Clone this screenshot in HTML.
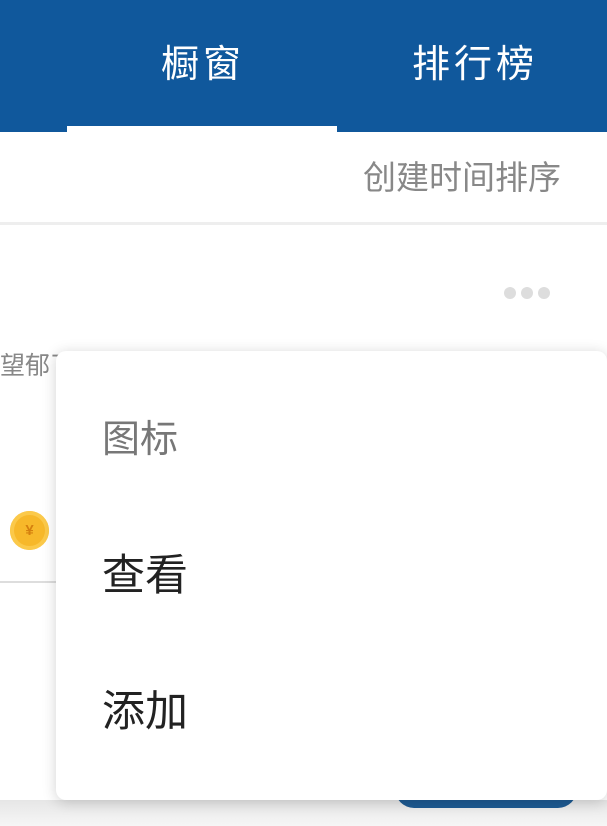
<!DOCTYPE html>
<html><head><meta charset="utf-8"><style>
*{margin:0;padding:0;box-sizing:border-box}
body{width:607px;height:826px;overflow:hidden;background:#fff;position:relative;font-family:"Liberation Sans","Noto Sans CJK SC",sans-serif}
.hdr{position:absolute;left:0;top:0;width:607px;height:132px;background:#10589c}
.t{position:absolute;top:40px;color:#fff;font-size:38px;line-height:50px;letter-spacing:4px}
.ul{position:absolute;left:67px;top:126px;width:270px;height:6px;background:#fff}
.sort{position:absolute;right:46px;top:156px;font-size:33px;color:#888;line-height:44px}
.div{position:absolute;left:0;top:222px;width:607px;height:3px;background:#eee}
.dot{position:absolute;top:287px;width:12px;height:12px;border-radius:50%;background:#ddd}
.txt{position:absolute;left:0;top:349px;font-size:25px;color:#888;line-height:34px}
.coin{position:absolute;left:10px;top:511px;width:39px;height:39px;border-radius:50%;background:#f7b82a;box-shadow:inset 0 0 0 4px #fbc94a;color:#d5800e;font-size:15px;font-weight:bold;text-align:center;line-height:39px}
.hl{position:absolute;left:0;top:581px;width:60px;height:2px;background:#ddd}
.btn{position:absolute;left:395px;top:770px;width:182px;height:38px;border-radius:20px;background:#1d5a92}
.shade{position:absolute;left:0;top:800px;width:607px;height:26px;background:linear-gradient(#e6e6e6,#f6f6f6)}
.menu{position:absolute;left:56px;top:351px;width:551px;height:449px;background:#fff;border-radius:10px;box-shadow:0 2px 14px rgba(0,0,0,.18)}
.mi{position:absolute;left:46px;font-size:43px;line-height:56px;color:#222}
</style></head><body>
<div class="hdr">
<div class="t" style="left:161px">橱窗</div>
<div class="t" style="left:412px">排行榜</div>
<div class="ul"></div>
</div>
<div class="sort">创建时间排序</div>
<div class="div"></div>
<div class="dot" style="left:504px"></div>
<div class="dot" style="left:521px"></div>
<div class="dot" style="left:538px"></div>
<div class="txt">望郁了</div>
<div class="coin">¥</div>
<div class="hl"></div>
<div class="shade"></div>
<div class="btn"></div>
<div class="menu">
<div class="mi" style="top:61px;color:#777;font-size:38px">图标</div>
<div class="mi" style="top:197px">查看</div>
<div class="mi" style="top:333px">添加</div>
</div>
</body></html>
